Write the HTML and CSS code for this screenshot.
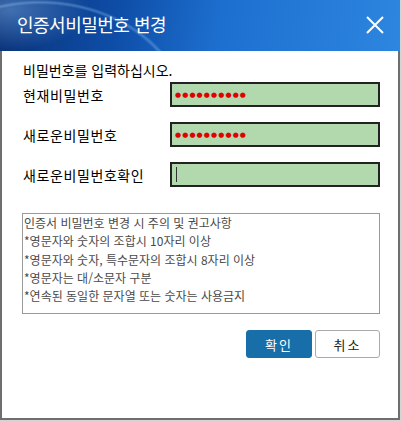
FILE: index.html
```html
<!DOCTYPE html>
<html lang="ko">
<head>
    <meta charset="UTF-8">
    <title>인증서비밀번호 변경</title>
    <link rel="stylesheet" href="styles.css">
</head>
<body>
    <div class="dialog">
        <div class="titlebar">
            <span class="title">인증서비밀번호 변경</span>
            <svg class="close" width="18" height="18" viewBox="0 0 18 18">
                <path d="M1 1 L17 17 M17 1 L1 17" stroke="#fff" stroke-width="2" fill="none"/>
            </svg>
        </div>

        <div class="content">
            <p class="intro">비밀번호를 입력하십시오.</p>

            <div class="fields">
                <label class="label">현재비밀번호</label>
                <div class="pw"><span class="dots">●●●●●●●●●●</span></div>

                <label class="label">새로운비밀번호</label>
                <div class="pw"><span class="dots">●●●●●●●●●●</span></div>

                <label class="label">새로운비밀번호확인</label>
                <div class="pw"><span class="caret"></span></div>
            </div>

            <div class="notice">
                <div>인증서 비밀번호 변경 시 주의 및 권고사항</div>
                <div>*영문자와 숫자의 조합시 10자리 이상</div>
                <div>*영문자와 숫자, 특수문자의 조합시 8자리 이상</div>
                <div>*영문자는 대/소문자 구분</div>
                <div>*연속된 동일한 문자열 또는 숫자는 사용금지</div>
            </div>

            <div class="buttons">
                <button class="btn btn-ok">확인</button>
                <button class="btn btn-cancel">취소</button>
            </div>
        </div>
    </div>
</body>
</html>
```

FILE: styles.css
```css
body {
    margin: 0;
    background-color: #d4d4d4;
    font-family: "Noto Sans CJK KR", "Noto Sans", sans-serif;
}

.dialog {
    width: 400px;
    height: 420px;
    box-sizing: border-box;
    background-color: #fff;
    border: 2px solid #6e6e6e;
    border-top: none;
}

/* title bar */
.titlebar {
    height: 51px;
    margin: 0 -2px;
    display: flex;
    align-items: center;
    justify-content: space-between;
    padding: 0 16px 4px 17px;
    box-sizing: border-box;
    background:
        radial-gradient(ellipse 150px 120px at 40px 120px, transparent 96%, rgba(150, 200, 250, 0.35) 98%, transparent 100%),
        radial-gradient(ellipse 80px 40px at 10px 10px, rgba(120, 170, 230, 0.5), transparent),
        linear-gradient(100deg, #0a3277 0%, #0e4ea8 30%, #1d6fcf 55%, #2d86e0 100%);
}

.title {
    color: #fff;
    font-size: 18px;
    letter-spacing: -0.5px;
}

.close {
    margin-top: 3px;
}

/* body */
.content {
    padding: 9px 18px 0 20px;
}

.intro {
    margin: 0 0 2px 1px;
    font-size: 14px;
    line-height: 20px;
    color: #000;
}

.fields {
    display: grid;
    grid-template-columns: 1fr 210px;
    grid-auto-rows: 25px;
    row-gap: 15px;
    align-items: center;
}

.label {
    padding-left: 1px;
    font-size: 14px;
    letter-spacing: 0.6px;
    color: #000;
}

.pw {
    height: 25px;
    box-sizing: border-box;
    border: 2px solid #222;
    background-color: #b1d9ad;
    display: flex;
    align-items: center;
    padding-left: 3px;
}

.dots {
    color: #e10000;
    font-family: "DejaVu Sans", sans-serif;
    font-size: 7px;
    letter-spacing: 1.1px;
}

.caret {
    width: 1px;
    height: 15px;
    margin-left: 1px;
    background-color: #333;
}

.notice {
    margin-top: 26px;
    height: 101px;
    box-sizing: border-box;
    border: 1px solid #999;
    padding: 0 0 0 1px;
    font-size: 12px;
    line-height: 18.3px;
    color: #4a4a4a;
}

.buttons {
    margin-top: 16px;
    display: flex;
    justify-content: flex-end;
    gap: 3px;
}

.btn {
    height: 28px;
    box-sizing: border-box;
    border-radius: 3px;
    font-family: "Noto Sans CJK KR", sans-serif;
    font-size: 13px;
    letter-spacing: 2px;
    cursor: pointer;
}

.btn-ok {
    width: 66px;
    background-color: #176ea8;
    border: 1px solid #176ea8;
    color: #fff;
}

.btn-cancel {
    width: 65px;
    background-color: #fff;
    border: 1px solid #aaa;
    color: #222;
}
```
